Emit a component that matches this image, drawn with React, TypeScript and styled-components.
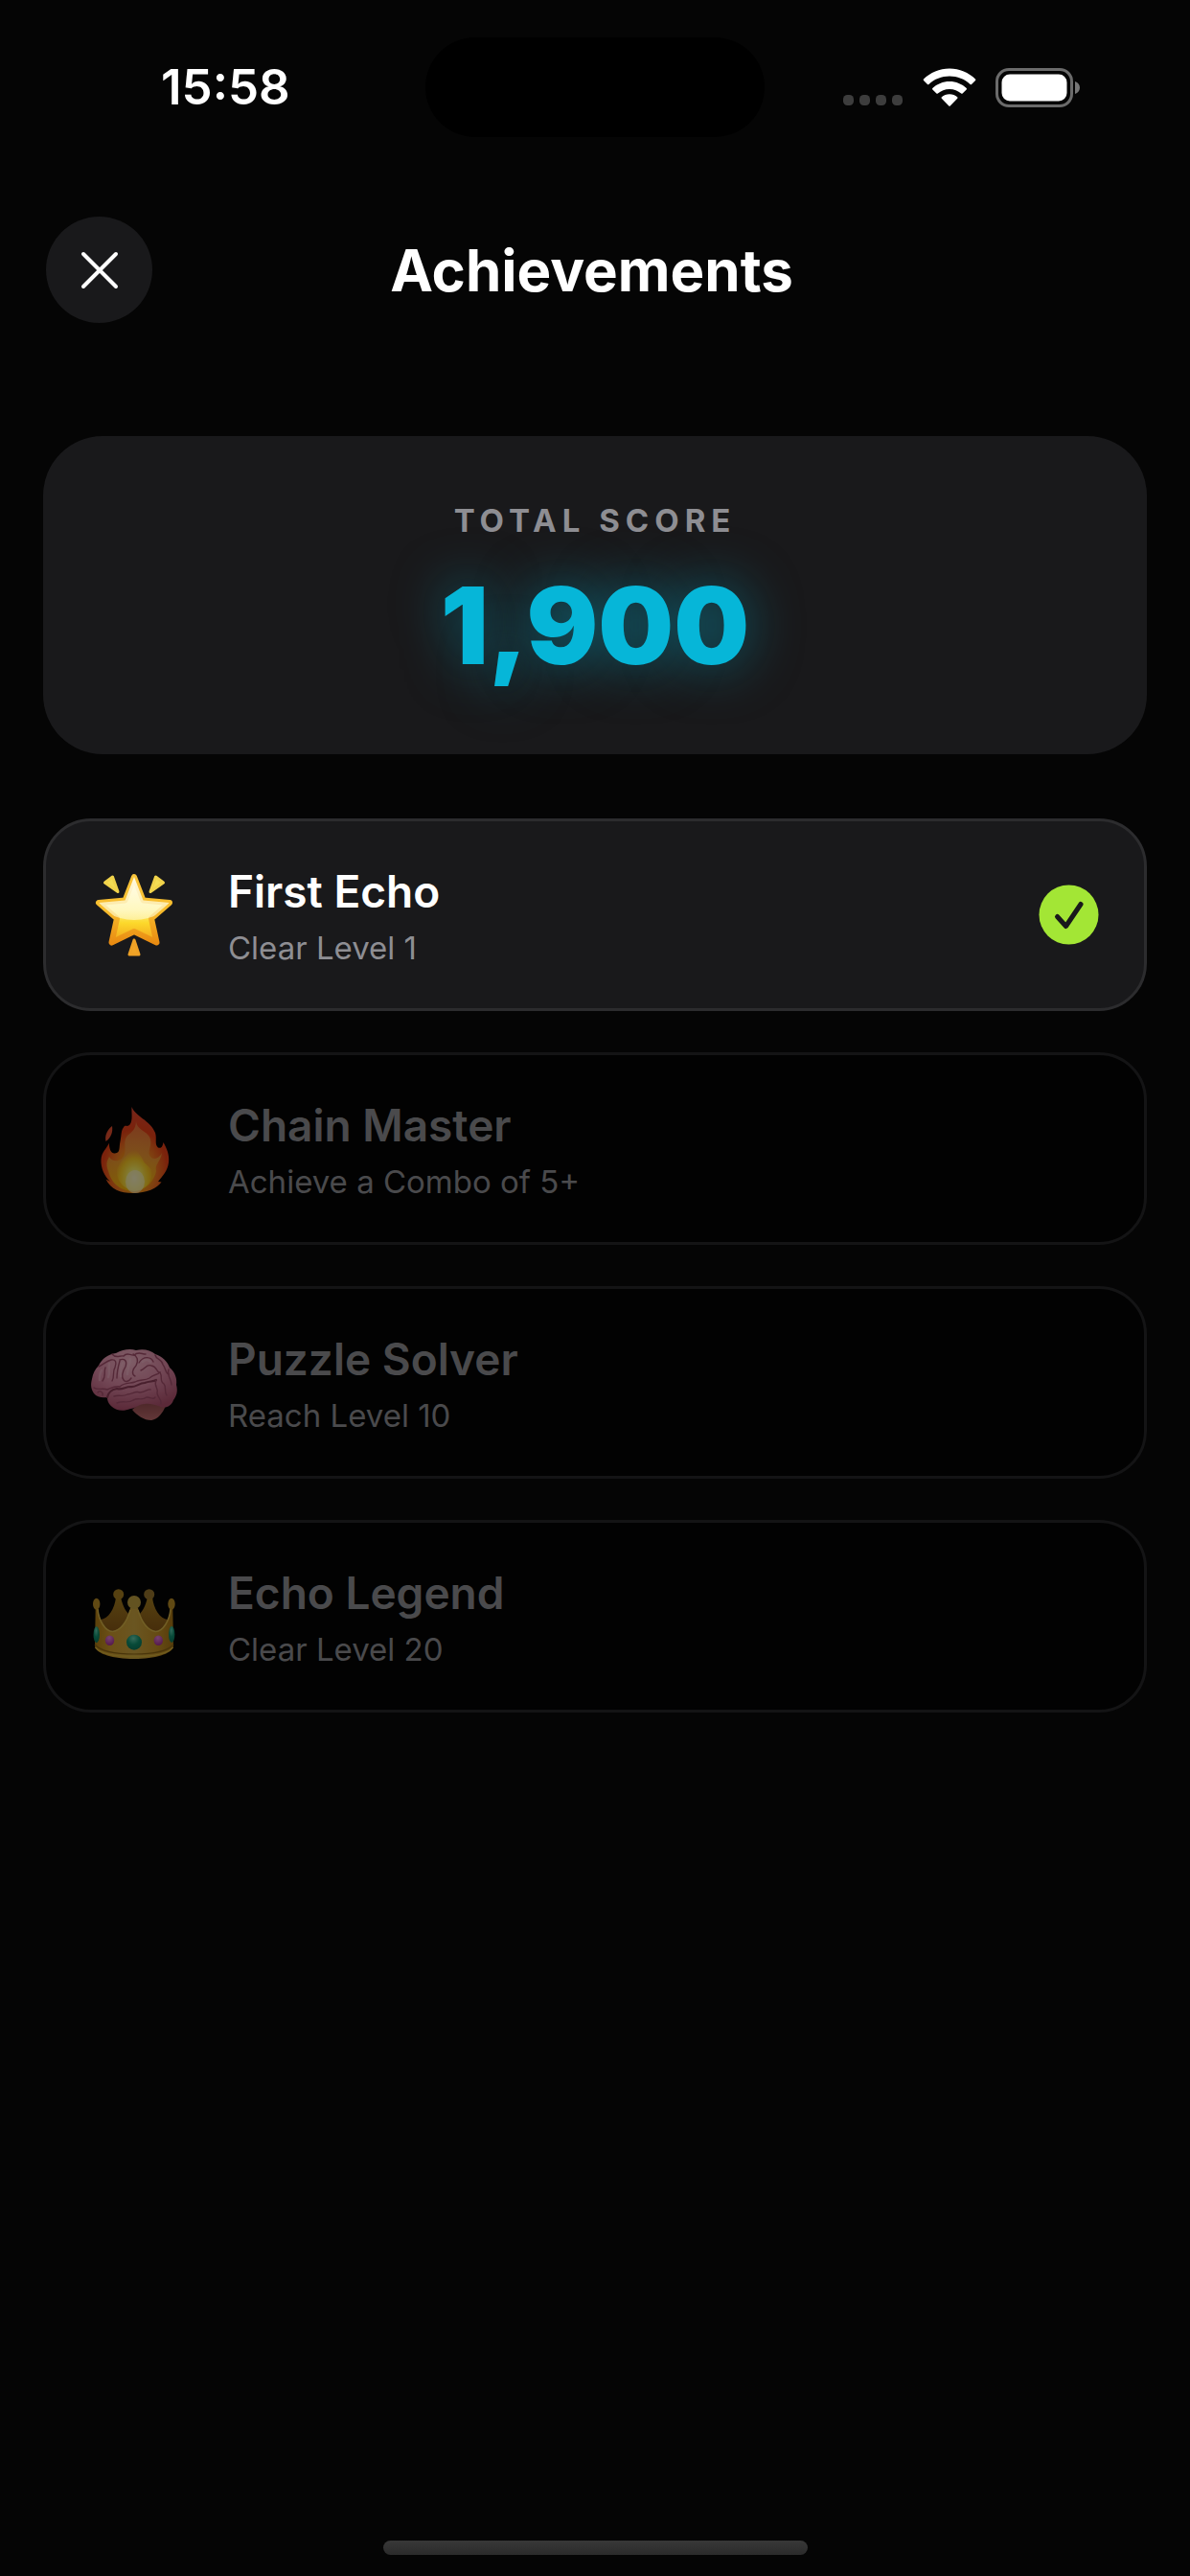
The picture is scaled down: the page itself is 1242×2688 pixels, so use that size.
import { ReactNode } from "react";
import styled, { createGlobalStyle } from "styled-components";

const GlobalStyle = createGlobalStyle`
  * {
    box-sizing: border-box;
  }
  body {
    margin: 0;
    background: #050505;
    color: #fff;
    font-family: Inter, "Liberation Sans", sans-serif;
  }
`;

const Screen = styled.div`
  display: flex;
  flex-direction: column;
  min-height: 100vh;
`;

const StatusBar = styled.div`
  display: grid;
  grid-template-columns: 1fr 354px 1fr;
  align-items: center;
  padding-top: 39px;
`;

const Time = styled.span`
  padding-left: 168px;
  font-size: 51px;
  line-height: 60px;
  font-weight: 600;
`;

const Island = styled.div`
  height: 104px;
  border-radius: 52px;
  background: #000;
`;

const StatusIcons = styled.div`
  display: flex;
  align-items: flex-end;
  justify-content: flex-end;
  gap: 20px;
  padding-right: 113px;

  svg {
    display: block;
  }
`;

const Header = styled.header`
  display: flex;
  align-items: center;
  justify-content: space-between;
  margin-top: 83px;
  padding: 0 48px;
`;

const CloseButton = styled.button`
  display: flex;
  align-items: center;
  justify-content: center;
  width: 111px;
  height: 111px;
  padding: 0;
  border: none;
  border-radius: 50%;
  background: #19191b;
  color: #fff;
  cursor: pointer;
`;

const HeaderSpacer = styled.div`
  width: 118px;
`;

const Heading = styled.h1`
  margin: 0;
  font-size: 60px;
  line-height: 76px;
  font-weight: 700;
`;

const Content = styled.main`
  padding: 118px 45px 0;
`;

const ScoreCard = styled.section`
  display: flex;
  flex-direction: column;
  align-items: center;
  gap: 24px;
  padding: 68px 0;
  border-radius: 62px;
  background: #19191b;
`;

const ScoreLabel = styled.span`
  color: #8e8e93;
  font-size: 33px;
  line-height: 40px;
  font-weight: 700;
  letter-spacing: 6px;
`;

const ScoreValue = styled.span`
  color: #06b6d8;
  font-size: 111px;
  line-height: 132px;
  font-weight: 900;
  text-shadow: 0 0 55px rgba(6, 182, 216, 0.5);
`;

const List = styled.ul`
  display: flex;
  flex-direction: column;
  gap: 43px;
  margin: 67px 0 0;
  padding: 0;
  list-style: none;
`;

const Row = styled.li<{ $unlocked: boolean }>`
  display: flex;
  align-items: center;
  gap: 53px;
  min-height: 201px;
  padding: 0 47px;
  border: 3px solid ${({ $unlocked }) => ($unlocked ? "#2c2c2e" : "#232325")};
  border-radius: 50px;
  background: ${({ $unlocked }) => ($unlocked ? "#19191b" : "#000")};
  opacity: ${({ $unlocked }) => ($unlocked ? 1 : 0.5)};
`;

const RowText = styled.div`
  display: flex;
  flex: 1;
  flex-direction: column;
  gap: 9px;
`;

const RowTitle = styled.h2<{ $unlocked: boolean }>`
  margin: 0;
  color: ${({ $unlocked }) => ($unlocked ? "#fff" : "#8e8e93")};
  font-size: 46px;
  line-height: 60px;
  font-weight: 600;
`;

const RowHint = styled.p`
  margin: 0;
  color: #8e8e93;
  font-size: 33px;
  line-height: 40px;
`;

const EmojiSvg = styled.svg`
  display: block;
  flex: none;
  overflow: visible;
`;

const HomeIndicator = styled.div`
  width: 443px;
  height: 15px;
  margin: auto auto 22px;
  border-radius: 8px;
  background: linear-gradient(#383838, #2b2b2b);
`;

const SignalIcon = () => (
  <svg width="63" height="13" viewBox="0 0 63 13" fill="#3d3d3d">
    {[0, 17, 34, 51].map((x) => (
      <rect key={x} x={x} width="11" height="11" rx="4.5" />
    ))}
  </svg>
);

const WifiIcon = () => (
  <svg width="56" height="41" viewBox="0 0 56 41" fill="#fff">
    <path d="M28 0.5C38.5 0.5 48 4.800 55 11.500Q55.600 12.200 55 12.900L51 17Q50.300 17.600 49.600 17C43.700 11.600 36.200 8.600 28 8.600S12.300 11.600 6.400 17Q5.700 17.600 5 17L1 12.900Q0.400 12.200 1 11.500C8 4.800 17.500 0.500 28 0.500Z" />
    <path d="M28 14C34.900 14 41.100 16.700 45.700 21Q46.300 21.700 45.700 22.400L41.600 26.500Q40.900 27.100 40.200 26.500C36.900 23.600 32.700 21.900 28 21.900S19.100 23.600 15.800 26.500Q15.100 27.100 14.400 26.500L10.300 22.400Q9.700 21.700 10.300 21C14.900 16.700 21.100 14 28 14Z" />
    <path d="M28 27.200C31.200 27.200 34 28.300 36.200 30.300Q36.900 31 36.200 31.700L28.700 39.400Q28 40.100 27.300 39.400L19.800 31.700Q19.100 31 19.800 30.300C22 28.300 24.800 27.200 28 27.200Z" />
  </svg>
);

const BatteryIcon = () => (
  <svg width="90" height="41" viewBox="0 0 90 41">
    <rect x="1.500" y="1.500" width="78" height="38" rx="12.500" fill="none" stroke="#6b6b6b" strokeWidth="3" />
    <rect x="6.500" y="6.500" width="68" height="28" rx="8.500" fill="#fff" />
    <path d="M83 14c3 1 5 3.500 5 6.500s-2 5.500-5 6.500z" fill="#777" />
  </svg>
);

const CloseIcon = () => (
  <svg width="40" height="40" viewBox="0 0 40 40" stroke="#fff" strokeWidth="4" strokeLinecap="round">
    <path d="M3 3L37 37M37 3L3 37" />
  </svg>
);

const CheckIcon = () => (
  <svg width="63" height="63" viewBox="0 0 63 63" role="img" aria-label="Unlocked">
    <circle cx="31.500" cy="31.500" r="31" fill="#a3e635" />
    <path
      d="M19.500 33.500L28.500 43.500L44 20.500"
      fill="none"
      stroke="#19191b"
      strokeWidth="5"
      strokeLinecap="round"
      strokeLinejoin="round"
    />
  </svg>
);

const Emoji = ({ children }: { children: ReactNode }) => (
  <EmojiSvg width="90" height="90" viewBox="0 0 90 90" aria-hidden="true">
    {children}
  </EmojiSvg>
);

const StarEmoji = () => (
  <Emoji>
    <defs>
      <linearGradient id="star-edge" x1="0" y1="0" x2="0" y2="1">
        <stop offset="0" stopColor="#f9c53c" />
        <stop offset="0.5" stopColor="#f8bd2c" />
        <stop offset="1" stopColor="#e98c12" />
      </linearGradient>
      <linearGradient id="star-body" x1="0" y1="0" x2="0" y2="1">
        <stop offset="0" stopColor="#fff3bd" />
        <stop offset="0.5" stopColor="#ffef8a" />
        <stop offset="0.700" stopColor="#fcd92b" />
        <stop offset="1" stopColor="#f2a01a" />
      </linearGradient>
      <linearGradient id="star-shine" x1="0" y1="0" x2="0" y2="1">
        <stop offset="0" stopColor="#fffdf0" />
        <stop offset="1" stopColor="#fffbd0" stopOpacity="0.600" />
      </linearGradient>
      <clipPath id="star-clip">
        <path d="M45 5L54.500 29.500L82 32L63 48.500L68.500 73.500L45 62L21.500 73.500L27 48.500L8 32L35.500 29.500Z" />
      </clipPath>
    </defs>
    <g strokeLinejoin="round" strokeWidth="3">
      <path d="M14.500 11L22.500 5L28 20.500Z" fill="#f4dd55" stroke="#f1d34b" />
      <path d="M75.500 11L67.500 5L62 20.500Z" fill="#f4dd55" stroke="#f1d34b" />
      <path d="M45 71L40 86H50Z" fill="#f0a528" stroke="#eea126" />
      <path
        d="M45 5L54.500 29.500L82 32L63 48.500L68.500 73.500L45 62L21.500 73.500L27 48.500L8 32L35.500 29.500Z"
        fill="url(#star-body)"
        stroke="url(#star-edge)"
        strokeWidth="6"
      />
    </g>
    <ellipse cx="45" cy="25" rx="38" ry="25" fill="url(#star-shine)" clipPath="url(#star-clip)" />
  </Emoji>
);

const FireEmoji = () => (
  <Emoji>
    <defs>
      <radialGradient id="fire-outer" cx="0.500" cy="0.750" r="0.700">
        <stop offset="0.200" stopColor="#ffb000" />
        <stop offset="0.450" stopColor="#f7791d" />
        <stop offset="0.700" stopColor="#ee3e12" />
        <stop offset="1" stopColor="#e8462c" />
      </radialGradient>
      <linearGradient id="fire-mid" x1="0" y1="0" x2="0" y2="1">
        <stop offset="0" stopColor="#f27a3f" />
        <stop offset="0.500" stopColor="#f39a35" />
        <stop offset="1" stopColor="#ffc400" />
      </linearGradient>
      <radialGradient id="fire-core" cx="0.500" cy="0.720" r="0.600">
        <stop offset="0" stopColor="#fff7c8" />
        <stop offset="0.350" stopColor="#ffef5c" />
        <stop offset="0.700" stopColor="#ffd21e" stopOpacity="0.800" />
        <stop offset="1" stopColor="#ffb61e" stopOpacity="0" />
      </radialGradient>
    </defs>
    <path d="M22 21C23 27 21 33 15.500 37C14 31 17 25 22 21Z" fill="#e94d2c" />
    <path
      d="M42.500 1C46 11 62 15 67 28C69 34 66 40 70 43.500C74 45 75 41 75.400 38C79 44 82 51 81 59C80 68 74 74 70 79L73.500 79.500C69 86 58 91 44 91S21 87 15.500 76.500L20 79C14 73 10 65 10.500 56C11 48 16 45 18.800 38.700C19 45 21 50 25 49.500C31 49 29 43 30.500 37C32 30 31 26 34.500 21.500C36 20 38 22 40.500 19.500C44 15 42 7 42.500 1Z"
      fill="url(#fire-outer)"
    />
    <path
      d="M47 16C48 26 60 26 62 35C64 43 57 49 63 54C67 57 72 53 74 49C73 58 66 61 68 68C66 78 58 88 44 89C28 88 21 79 18 68C15 60 17 57 19 53C23 60 33 58 35 50C37 43 33 37 38 31C42 28 47 24 47 16Z"
      fill="url(#fire-mid)"
      opacity="0.850"
    />
    <path
      d="M46 40C43 48 32 54 28 64C24 76 34 87 45 89C57 88 65 79 63 68C62 62 56 62 54 56C52 50 46 48 46 40Z"
      fill="url(#fire-core)"
    />
    <ellipse cx="46" cy="79" rx="10" ry="12" fill="#fff6c4" opacity="0.650" />
  </Emoji>
);

const BrainEmoji = () => (
  <Emoji>
    <defs>
      <radialGradient id="brain-body" cx="0.450" cy="0.200" r="0.800">
        <stop offset="0" stopColor="#f7b4c8" />
        <stop offset="0.500" stopColor="#e08aa6" />
        <stop offset="1" stopColor="#b04e6c" />
      </radialGradient>
      <linearGradient id="brain-stem" x1="0" y1="0" x2="0" y2="1">
        <stop offset="0" stopColor="#8c4548" />
        <stop offset="1" stopColor="#c06a6c" />
      </linearGradient>
    </defs>
    <path d="M43 73C48 79 55 84 63 84C70 83 75 76 78 69L56 62Z" fill="url(#brain-stem)" />
    <path
      d="M3 56C-1 50 0 45 1 41C2 35 4 31 8 27C11 20 18 15 26 14C33 10 41 9 47 11C55 9 62 11 67 15C74 17 80 23 82 29C88 34 90 41 89 47C91 54 89 59 86 63C84 69 78 72 73 70C67 68 61 66 56 67C50 67 46 72 41 72C34 75 26 74 22 70C18 67 17 63 17 60C12 61 6 60 3 56Z"
      fill="url(#brain-body)"
    />
    <g fill="none" stroke="#a34c6a" strokeWidth="1.400" strokeLinecap="round" strokeLinejoin="round">
      <path d="M17 60C18 54 22 52 27 51C32 53 36 49 41 49C47 50 50 45 56 45C61 43 65 44 68 42" strokeWidth="2.200" stroke="#8a3a55" />
      <path d="M3 50C7 53 12 50 17 52C22 50 25 48 30 49C35 44 41 46 46 44C51 41 56 43 61 40C65 36 69 37 72 34" />
      <path d="M8 28C13 26 16 22 21 21C26 20 27 24 25 29C22 33 25 38 22 43M15 29C13 34 16 38 12 43" />
      <path d="M30 21C35 19 38 22 36 28C33 33 31 38 34 42C36 45 40 43 42 40M30 22C28 29 27 34 27 40" />
      <path d="M44 15C48 17 50 21 47 27C43 31 42 36 46 38M50 24C55 16 63 18 65 23M52 32C57 30 58 25 63 27C69 28 68 33 71 34" />
      <path d="M22 15C26 20 30 16 34 17C38 12 41 17 45 16C49 12 53 15 57 15M67 16C68 21 74 20 75 26C78 29 77 34 81 36" />
      <path d="M72 34C75 39 71 43 76 46C79 49 76 54 79 58M81 31C79 38 84 41 84 47M68 42C65 49 71 50 69 56C70 61 74 62 73 67" />
      <path d="M24 59C30 57 33 60 38 57C43 57 46 53 51 55C57 55 59 51 62 52M27 66C34 63 39 67 44 63C50 60 53 64 58 60C63 60 65 63 67 60" />
      <path d="M7 55C9 52 13 55 12 58" />
    </g>
    <g fill="none" stroke="#ffc6d6" strokeWidth="2.500" strokeLinecap="round" opacity="0.400">
      <path d="M19 25C18 30 20 34 18 39M33 24C31 29 30 33 31 38M41 20C40 26 38 31 38 36M54 23C57 20 60 21 62 23M11 32C9 35 9 38 9 42" />
    </g>
  </Emoji>
);

const CrownEmoji = () => (
  <Emoji>
    <defs>
      <linearGradient id="crown-front" x1="0" y1="0" x2="1" y2="0">
        <stop offset="0" stopColor="#b27c10" />
        <stop offset="0.200" stopColor="#d09a28" />
        <stop offset="0.500" stopColor="#cfa63e" />
        <stop offset="0.800" stopColor="#c59022" />
        <stop offset="1" stopColor="#a87410" />
      </linearGradient>
      <linearGradient id="crown-back" x1="0" y1="0" x2="0" y2="1">
        <stop offset="0" stopColor="#a8801c" />
        <stop offset="1" stopColor="#865412" />
      </linearGradient>
      <radialGradient id="crown-green" cx="0.450" cy="0.250" r="0.800">
        <stop offset="0" stopColor="#64cfae" />
        <stop offset="0.500" stopColor="#0a8f6c" />
        <stop offset="1" stopColor="#087154" />
      </radialGradient>
      <radialGradient id="crown-pink" cx="0.450" cy="0.250" r="0.800">
        <stop offset="0" stopColor="#e883da" />
        <stop offset="1" stopColor="#a0268f" />
      </radialGradient>
    </defs>
    <path d="M10 48C18 47 25 37 26 24H31C33 35 37 41 42 44V62H14Z" fill="url(#crown-back)" />
    <path d="M80 48C72 47 65 37 64 24H59C57 35 53 41 48 44V62H76Z" fill="url(#crown-back)" />
    <circle cx="28.700" cy="21.700" r="5.500" fill="#a67e1e" />
    <circle cx="60.700" cy="21.700" r="5.500" fill="#97742a" />
    <path
      d="M4.700 36H7C8 49 15 60.500 22.500 60.500C32 59 38 48 41 36H49C52 48 58 59 67.500 60.500C75 60.500 82 49 83 36H85.300L86 76C84 84 67 89 45 89S6 84 4 76Z"
      fill="url(#crown-front)"
    />
    <path
      d="M7 37C8 49 15 60.500 22.500 60.500C32 59 38 48 41 38M83 37C82 49 75 60.500 67.500 60.500C58 59 52 48 49 38"
      fill="none"
      stroke="#dcb746"
      strokeWidth="1.500"
    />
    <path d="M4 74C10 81 26 84 45 84S80 81 86 74" fill="none" stroke="#8d6610" strokeWidth="1.200" />
    <path d="M4.500 77C10 84 26 86.500 45 86.500S80 84 85.500 77" fill="none" stroke="#d8b036" strokeWidth="1.500" />
    <circle cx="45" cy="30" r="7" fill="#c0a03e" />
    <ellipse cx="5.700" cy="31.700" rx="3.700" ry="6" fill="#bb8c22" />
    <ellipse cx="84" cy="31.700" rx="3.700" ry="6" fill="#bb8c22" />
    <ellipse cx="5.700" cy="63.700" rx="3.200" ry="8.500" fill="url(#crown-green)" />
    <ellipse cx="84.200" cy="63.500" rx="3.200" ry="8.500" fill="url(#crown-green)" />
    <circle cx="45" cy="71.700" r="8" fill="url(#crown-green)" />
    <ellipse cx="19.500" cy="69.700" rx="4.700" ry="5.300" fill="url(#crown-pink)" />
    <ellipse cx="70.300" cy="69.700" rx="4.700" ry="5.300" fill="url(#crown-pink)" />
  </Emoji>
);

const achievements = [
  { title: "First Echo", hint: "Clear Level 1", Icon: StarEmoji, unlocked: true },
  { title: "Chain Master", hint: "Achieve a Combo of 5+", Icon: FireEmoji, unlocked: false },
  { title: "Puzzle Solver", hint: "Reach Level 10", Icon: BrainEmoji, unlocked: false },
  { title: "Echo Legend", hint: "Clear Level 20", Icon: CrownEmoji, unlocked: false },
];

const App = () => {
  const score = 1900;

  return (
    <Screen>
      <GlobalStyle />
      <StatusBar>
        <Time>15:58</Time>
        <Island />
        <StatusIcons>
          <SignalIcon />
          <WifiIcon />
          <BatteryIcon />
        </StatusIcons>
      </StatusBar>
      <Header>
        <CloseButton type="button" aria-label="Close">
          <CloseIcon />
        </CloseButton>
        <Heading>Achievements</Heading>
        <HeaderSpacer />
      </Header>
      <Content>
        <ScoreCard>
          <ScoreLabel>TOTAL SCORE</ScoreLabel>
          <ScoreValue>{score.toLocaleString("en-US")}</ScoreValue>
        </ScoreCard>
        <List>
          {achievements.map(({ title, hint, Icon, unlocked }) => (
            <Row key={title} $unlocked={unlocked}>
              <Icon />
              <RowText>
                <RowTitle $unlocked={unlocked}>{title}</RowTitle>
                <RowHint>{hint}</RowHint>
              </RowText>
              {unlocked && <CheckIcon />}
            </Row>
          ))}
        </List>
      </Content>
      <HomeIndicator />
    </Screen>
  );
};

export default App;
